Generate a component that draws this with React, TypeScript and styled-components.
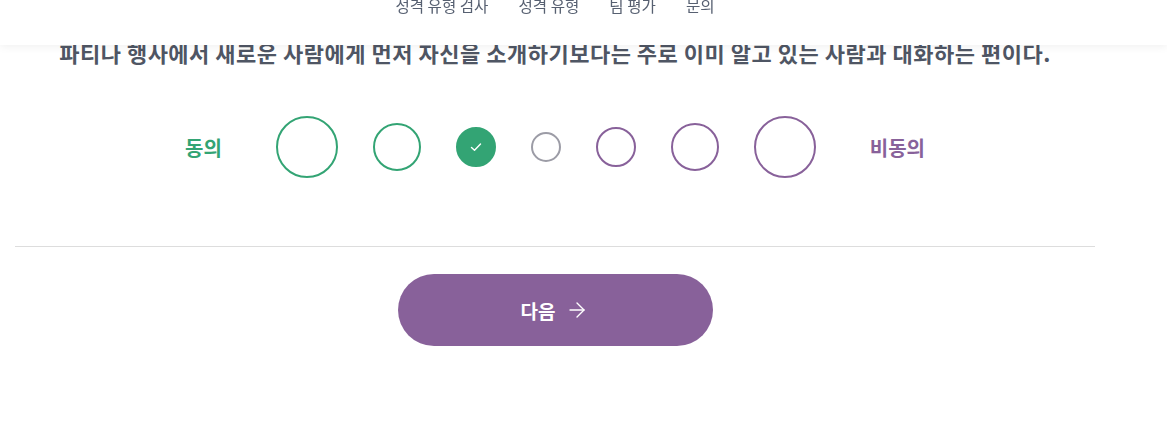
import React, { useState } from "react";
import styled, { createGlobalStyle } from "styled-components";
import { ArrowRight } from "lucide-react";

const GlobalStyle = createGlobalStyle`
  html, body {
    margin: 0;
    padding: 0;
    background: #ffffff;
  }
  body {
    font-family: "Noto Sans CJK KR", "Noto Sans", sans-serif;
  }
`;

const Header = styled.header`
  position: fixed;
  top: 0;
  left: 0;
  right: 0;
  height: 45px;
  background: #ffffff;
  box-shadow: 0 2px 8px rgba(0, 0, 0, 0.06);
  z-index: 10;
  overflow: hidden;
`;

const Nav = styled.nav`
  width: 1080px;
  margin-left: 15px;
  display: flex;
  justify-content: center;
  gap: 30px;
  margin-top: -7px;

  a {
    text-decoration: none;
    color: #576071;
    font-size: 15.6px;
    line-height: 24px;
    white-space: nowrap;
  }
`;

const Main = styled.main`
  width: 1080px;
  margin-left: 15px;
  padding-top: 37px;
`;

const Question = styled.p`
  margin: 0;
  text-align: center;
  font-size: 22px;
  letter-spacing: 0.5px;
  line-height: 30px;
  font-weight: 700;
  color: #4f5664;
`;

const Scale = styled.div`
  display: flex;
  align-items: center;
  justify-content: center;
  gap: 35px;
  margin-top: 49px;
  height: 62px;
`;

const Label = styled.span<{ $tone: string }>`
  font-size: 20px;
  font-weight: 700;
  color: ${(p) => p.$tone};
  margin: 0 19px;
`;

const Choice = styled.button<{ $size: number; $tone: string; $checked: boolean }>`
  width: ${(p) => p.$size}px;
  height: ${(p) => p.$size}px;
  border-radius: 50%;
  border: 2px solid ${(p) => p.$tone};
  background: ${(p) => (p.$checked ? p.$tone : "#ffffff")};
  padding: 0;
  display: flex;
  align-items: center;
  justify-content: center;
  cursor: pointer;
  flex-shrink: 0;
`;

const Divider = styled.hr`
  border: 0;
  border-top: 1px solid #dddddd;
  margin: 68px 0 0;
`;

const Footer = styled.div`
  display: flex;
  justify-content: center;
  padding-top: 27px;
`;

const NextButton = styled.button`
  width: 315px;
  height: 72px;
  border: 0;
  border-radius: 36px;
  background: #88619a;
  color: #ffffff;
  font-family: inherit;
  font-size: 19px;
  font-weight: 700;
  display: flex;
  align-items: center;
  justify-content: center;
  gap: 10px;
  cursor: pointer;
`;

const GREEN = "#33a474";
const PURPLE = "#88619a";
const GRAY = "#9c9ca6";

const choices = [
  { size: 62, tone: GREEN },
  { size: 48, tone: GREEN },
  { size: 40, tone: GREEN },
  { size: 30, tone: GRAY },
  { size: 40, tone: PURPLE },
  { size: 48, tone: PURPLE },
  { size: 62, tone: PURPLE },
];

const links = ["성격 유형 검사", "성격 유형", "팀 평가", "문의"];

const CheckMark = () => (
  <svg width="16" height="16" viewBox="0 0 16 16" fill="none">
    <path d="M3.5 8.5 L6.5 11.2 L12.5 5" stroke="#ffffff" strokeWidth="1.4" strokeLinecap="round" strokeLinejoin="round" />
  </svg>
);

const App = () => {
  const [selected, setSelected] = useState<number>(2);

  return (
    <>
      <GlobalStyle />
      <Header>
        <Nav>
          {links.map((l) => (
            <a key={l} href="#">
              {l}
            </a>
          ))}
        </Nav>
      </Header>
      <Main>
        <Question>
          파티나 행사에서 새로운 사람에게 먼저 자신을 소개하기보다는 주로 이미 알고 있는 사람과 대화하는 편이다.
        </Question>
        <Scale>
          <Label $tone={GREEN}>동의</Label>
          {choices.map((c, i) => (
            <Choice
              key={i}
              $size={c.size}
              $tone={c.tone}
              $checked={selected === i}
              onClick={() => setSelected(i)}
            >
              {selected === i && <CheckMark />}
            </Choice>
          ))}
          <Label $tone={PURPLE}>비동의</Label>
        </Scale>
        <Divider />
        <Footer>
          <NextButton>
            다음 <ArrowRight size={24} strokeWidth={1.4} />
          </NextButton>
        </Footer>
      </Main>
    </>
  );
};

export default App;
